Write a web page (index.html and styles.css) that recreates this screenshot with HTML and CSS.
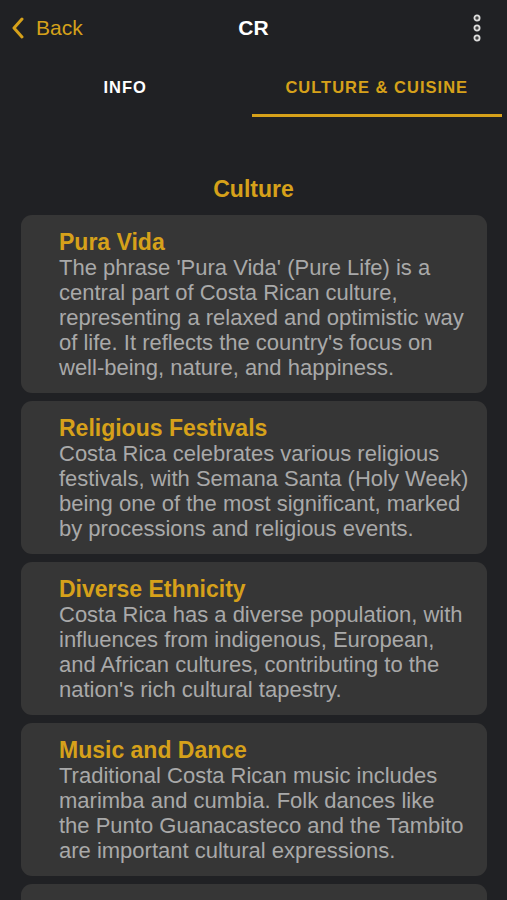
FILE: index.html
```html
<!DOCTYPE html>
<html lang="en">
<head>
  <meta charset="UTF-8" />
  <title>CR</title>
  <link rel="stylesheet" href="styles.css">
</head>
<body>

  <header class="topbar">
    <div class="back">
      <svg width="14" height="22" viewBox="0 0 14 22"><path d="M11 2 L3 11 L11 20" fill="none" stroke="#d6a11a" stroke-width="3" stroke-linecap="round" stroke-linejoin="round"/></svg>
      <span>Back</span>
    </div>
    <div class="title">CR</div>
    <div class="menu">
      <svg width="10" height="30" viewBox="0 0 10 30">
        <circle cx="5" cy="5" r="2.6" fill="#444" stroke="#ddd" stroke-width="1.8"/>
        <circle cx="5" cy="15" r="2.6" fill="#444" stroke="#ddd" stroke-width="1.8"/>
        <circle cx="5" cy="25" r="2.6" fill="#444" stroke="#ddd" stroke-width="1.8"/>
      </svg>
    </div>
  </header>

  <nav class="tabs">
    <div class="tab">INFO</div>
    <div class="tab active">CULTURE &amp; CUISINE</div>
  </nav>

  <h2 class="section-title">Culture</h2>

  <div class="cards">
    <div class="card">
      <h3>Pura Vida</h3>
      <p>The phrase 'Pura Vida' (Pure Life) is a central part of Costa Rican culture, representing a relaxed and optimistic way of life. It reflects the country's focus on well-being, nature, and happiness.</p>
    </div>
    <div class="card">
      <h3>Religious Festivals</h3>
      <p>Costa Rica celebrates various religious festivals, with Semana Santa (Holy Week) being one of the most significant, marked by processions and religious events.</p>
    </div>
    <div class="card">
      <h3>Diverse Ethnicity</h3>
      <p>Costa Rica has a diverse population, with influences from indigenous, European, and African cultures, contributing to the nation's rich cultural tapestry.</p>
    </div>
    <div class="card">
      <h3>Music and Dance</h3>
      <p>Traditional Costa Rican music includes marimba and cumbia. Folk dances like the Punto Guanacasteco and the Tambito are important cultural expressions.</p>
    </div>
    <div class="card">
      <h3>Cuisine</h3>
      <p>Costa Rican food is simple and hearty.</p>
    </div>
  </div>

</body>
</html>
```

FILE: styles.css
```css
body {
  font-family: "Liberation Sans", Arial, sans-serif;
  background: #202124;
  margin: 0;
  overflow: hidden;
  height: 900px;
}

.topbar {
  display: flex;
  align-items: center;
  justify-content: space-between;
  height: 56px;
  padding: 0 11px;
}

.back {
  flex: 1;
  display: flex;
  align-items: center;
  gap: 11px;
  color: #d6a11a;
  font-size: 21px;
}

.title {
  color: #fff;
  font-weight: bold;
  font-size: 21px;
}

.menu {
  flex: 1;
  display: flex;
  justify-content: flex-end;
}

.menu svg {
  display: block;
  margin-right: 14px;
}

.tabs {
  display: flex;
  margin-top: 6px;
}

.tab {
  flex: 1;
  text-align: center;
  color: #fff;
  font-weight: bold;
  font-size: 16.5px;
  line-height: 19px;
  letter-spacing: 1px;
  padding: 16px 0 17px;
  border-bottom: 3px solid transparent;
}

.tab.active {
  color: #d6a11a;
  border-bottom-color: #d6a11a;
  margin-left: 1px;
  margin-right: 5px;
}

.section-title {
  text-align: center;
  color: #d6a11a;
  font-size: 23px;
  font-weight: bold;
  margin: 59px 0 13px;
  line-height: 26px;
}

.cards {
  display: flex;
  flex-direction: column;
  gap: 8px;
  padding: 0 20px 0 21px;
}

.card {
  background: #363636;
  border-radius: 11px;
  padding: 14px 18px 13px 38px;
}

.card h3 {
  margin: 0;
  color: #d6a11a;
  font-size: 23px;
  line-height: 26px;
}

.card p {
  margin: 0;
  color: #a9a9a9;
  font-size: 22px;
  line-height: 25px;
}
```
